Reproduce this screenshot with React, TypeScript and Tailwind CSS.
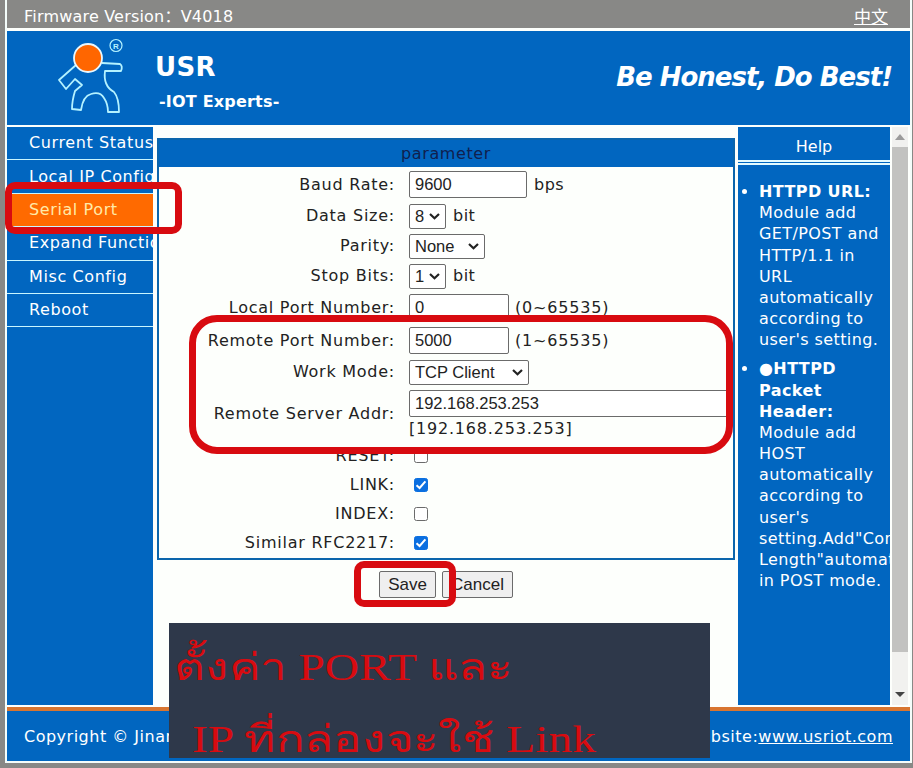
import type { ReactNode } from "react";

const ui = "font-['DejaVu_Sans','Noto_Sans_CJK_SC',sans-serif]";
const arial = "font-['Liberation_Sans',Arial,sans-serif]";

const menu = ["Current Status", "Local IP Config", "Serial Port", "Expand Function", "Misc Config", "Reboot"];

function Row({ label, h, children }: { label: string; h: string; children: ReactNode }) {
  return (
    <div className={`flex items-center ${h}`}>
      <div className="w-[236px] shrink-0 whitespace-nowrap text-right tracking-[0.75px]">{label}</div>
      <div className="ml-[14px] flex min-w-0 flex-1 items-center">{children}</div>
    </div>
  );
}

function Field({ value, w }: { value: string; w: string }) {
  return (
    <input
      readOnly
      value={value}
      className={`h-[27px] shrink-0 rounded-[2px] border border-[#6b6b6b] bg-white px-[5px] text-[16.5px] text-[#222] ${arial} ${w}`}
    />
  );
}

function Pick({ value, w }: { value: string; w: string }) {
  return (
    <div className={`flex h-[25px] shrink-0 items-center justify-between rounded-[2px] border border-[#6b6b6b] bg-white pl-[5px] pr-[5px] text-[16.5px] text-[#222] ${arial} ${w}`}>
      <span className="whitespace-nowrap">{value}</span>
      <svg width="11" height="7" viewBox="0 0 11 7" fill="none" stroke="#222" strokeWidth="2.2">
        <path d="M1 1 5.5 5.2 10 1" />
      </svg>
    </div>
  );
}

function Check({ on }: { on?: boolean }) {
  return (
    <span className={`ml-[5px] flex h-[14px] w-[14px] items-center justify-center rounded-[2.5px] border ${on ? "border-[#0b6fe0] bg-[#0b6fe0]" : "border-[#6b6b6b] bg-white"}`}>
      {on && (
        <svg width="12" height="12" viewBox="0 0 12 12" className="shrink-0" fill="none" stroke="white" strokeWidth="2">
          <path d="M1.5 6.2 4.6 9 10.4 2.4" />
        </svg>
      )}
    </span>
  );
}

function Logo() {
  return (
    <svg width="72" height="80" viewBox="0 0 72 80" fill="none" stroke="#b4f2ff" strokeWidth="1.8" strokeLinejoin="round">
      <path d="M19 28 2 43 9 52 18 42 25 48 18 54 Q15 64 15 72 L24 73 Q26 59 34 57 Q43 54 47 61 Q51 67 51 75 L62 75 Q62 61 57 55 Q46 49 48 34 L64 34 Q66 29 63 27 L45 26" />
      <circle cx="31" cy="21" r="14" fill="#ff6600" stroke="#e8f8ff" />
      <circle cx="59" cy="8.500" r="6" strokeWidth="1.2" />
      <text x="59" y="11.500" textAnchor="middle" fontSize="8" fill="#b4f2ff" stroke="none" fontFamily="Liberation Sans">R</text>
    </svg>
  );
}

export default function App() {
  return (
    <div className={`relative h-[768px] w-[913px] overflow-hidden bg-[#888886] pl-[5px] text-[16px] leading-[20px] text-[#222] ${ui}`}>
      <div className="flex h-[763px] w-[907px] flex-col border-x-2 border-b-2 border-[#f4fdfb] bg-[#fdfffc]">
        <div className="flex h-[28px] shrink-0 items-center justify-between bg-[#888886] pl-[17px] pr-[22px] pt-[6px] text-white">
          <span className="tracking-[0.2px]">Firmware Version：V4018</span>
          <a className="text-[17px] underline">中文</a>
        </div>
        <header className="mt-[3px] flex h-[94px] shrink-0 bg-[#0166c0] font-bold text-white">
          <div className="ml-[50px] mt-[6px]"><Logo /></div>
          <div className="ml-[26px] flex-1 whitespace-nowrap">
            <div className="mt-[20px] text-[26px] leading-[32px] tracking-[0.3px]">USR</div>
            <div className="ml-[4px] mt-[9px] tracking-[0.2px]">-IOT Experts-</div>
          </div>
          <div className="mr-[18px] mt-[29px] whitespace-nowrap text-[26px] italic leading-[34px] tracking-[-1px]">Be Honest, Do Best!</div>
        </header>

        <div className="mt-[2px] flex h-[578px] shrink-0">
          <nav className="w-[146px] shrink-0 overflow-hidden bg-[#0166c0] text-white">
            {menu.map((m) => (
              <div
                key={m}
                className={`flex h-[33.400px] items-center whitespace-nowrap border-b border-[#c9f6ff] pl-[22px] tracking-[0.6px] ${m === "Serial Port" ? "bg-[#ff6a00] text-[#ffe9a8]" : ""}`}
              >
                {m}
              </div>
            ))}
          </nav>

          <main className="ml-[4px] w-[578px] shrink-0">
            <section className="mt-[11px] h-[422px] border-2 border-[#0b65ac] bg-[#fdfffc]">
              <h1 className="h-[27px] bg-[#0166c0] pt-[4px] text-center tracking-[0.6px] text-[#10204e]">parameter</h1>
              <div className="pt-px">
                <Row label="Baud Rate:" h="h-[33px]"><Field value="9600" w="w-[118px]" /><span className="ml-[7px] tracking-[0.5px]">bps</span></Row>
                <Row label="Data Size:" h="h-[30px]"><Pick value="8" w="w-[37px]" /><span className="ml-[7px] tracking-[0.5px]">bit</span></Row>
                <Row label="Parity:" h="h-[30px]"><Pick value="None" w="w-[76px]" /></Row>
                <Row label="Stop Bits:" h="h-[30px]"><Pick value="1" w="w-[37px]" /><span className="ml-[7px] tracking-[0.5px]">bit</span></Row>
                <Row label="Local Port Number:" h="h-[33px]"><Field value="0" w="w-[100px]" /><span className="ml-[6px] tracking-[0.8px]">(0~65535)</span></Row>
                <Row label="Remote Port Number:" h="h-[33px]"><Field value="5000" w="w-[100px]" /><span className="ml-[6px] tracking-[0.8px]">(1~65535)</span></Row>
                <Row label="Work Mode:" h="h-[30px]"><Pick value="TCP Client" w="w-[120px]" /></Row>
                <Row label="Remote Server Addr:" h="h-[54px]">
                  <div className="w-[324px] overflow-hidden">
                    <Field value="192.168.253.253" w="w-[324px]" />
                    <div className="mt-[2px] tracking-[0.8px]">[192.168.253.253]</div>
                  </div>
                </Row>
                <Row label="RESET:" h="h-[29px]"><Check /></Row>
                <Row label="LINK:" h="h-[29px]"><Check on /></Row>
                <Row label="INDEX:" h="h-[29px]"><Check /></Row>
                <Row label="Similar RFC2217:" h="h-[29px]"><Check on /></Row>
              </div>
            </section>
            <div className={`ml-[222px] mt-[11px] flex gap-[6px] text-[17px] ${arial}`}>
              <button className="h-[27px] w-[57px] rounded-[2px] border border-[#6b6b6b] bg-[#efefef]">Save</button>
              <button className="h-[27px] w-[71px] rounded-[2px] border border-[#6b6b6b] bg-[#efefef]">Cancel</button>
            </div>
          </main>

          <aside className="ml-[3px] w-[152px] shrink-0 overflow-hidden bg-[#0166c0] text-white">
            <div className="h-[33px] pt-[10px] text-center">Help</div>
            <div className="h-[5px] border-y-2 border-[#e4fbff]" />
            <ul className="mt-[16px] w-[190px] list-disc pl-[21px] leading-[21.170px] tracking-[0.4px]">
              <li><b>HTTPD URL:</b><br />Module add<br />GET/POST and<br />HTTP/1.1 in<br />URL<br />automatically<br />according to<br />user's setting.</li>
              <li className="mt-[8px]"><b>●HTTPD<br />Packet<br />Header:</b><br />Module add<br />HOST<br />automatically<br />according to<br />user's<br />setting.Add"Content-<br />Length"automatically<br />in POST mode.</li>
            </ul>
          </aside>

          <div className="ml-[2px] flex w-[16px] shrink-0 flex-col items-center bg-[#f1f1ef]">
            <svg width="16" height="20" viewBox="0 0 16 20"><path d="M3 13 8 7l5 6z" fill="#9b9b9b" /></svg>
            <div className="h-[505px] w-full bg-[#c2c2c0]" />
            <svg width="16" height="20" viewBox="0 0 16 20" className="mt-[32px]"><path d="M3 8h10l-5 5z" fill="#444" /></svg>
          </div>
        </div>

        <footer className="mt-[2px] flex h-[54px] shrink-0 items-center justify-between border-t-4 border-[#d87530] bg-[#0166c0] pl-[17px] pr-[17px] pt-[2px] tracking-[0.5px] text-white">
          <span>Copyright © Jinan</span>
          <span>website:<a className="underline">www.usriot.com</a></span>
        </footer>
      </div>

      {/* tutorial callouts drawn over the page */}
      <div className="absolute left-[5px] top-[182px] h-[52px] w-[177px] rounded-[10px] border-[7px] border-[#d80b10]" />
      <div className="absolute left-[189px] top-[315px] h-[139px] w-[544px] rounded-[28px] border-[7px] border-[#d80b10]" />
      <div className="absolute left-[354px] top-[561px] h-[46px] w-[102px] rounded-[10px] border-[7px] border-[#d80b10]" />
      <div className="absolute left-[169px] top-[623px] h-[135px] w-[541px] whitespace-nowrap bg-[#2e384a] font-['Liberation_Serif',serif] text-[38px] leading-[72px] text-[#d80b10]">
        <div className="absolute left-[5px] top-[8px] origin-left scale-x-[1.25]">ตั้งค่า PORT และ</div>
        <div className="absolute left-[23px] top-[80px] origin-left scale-x-[1.25]">IP ที่กล่องจะใช้ Link</div>
      </div>
    </div>
  );
}
